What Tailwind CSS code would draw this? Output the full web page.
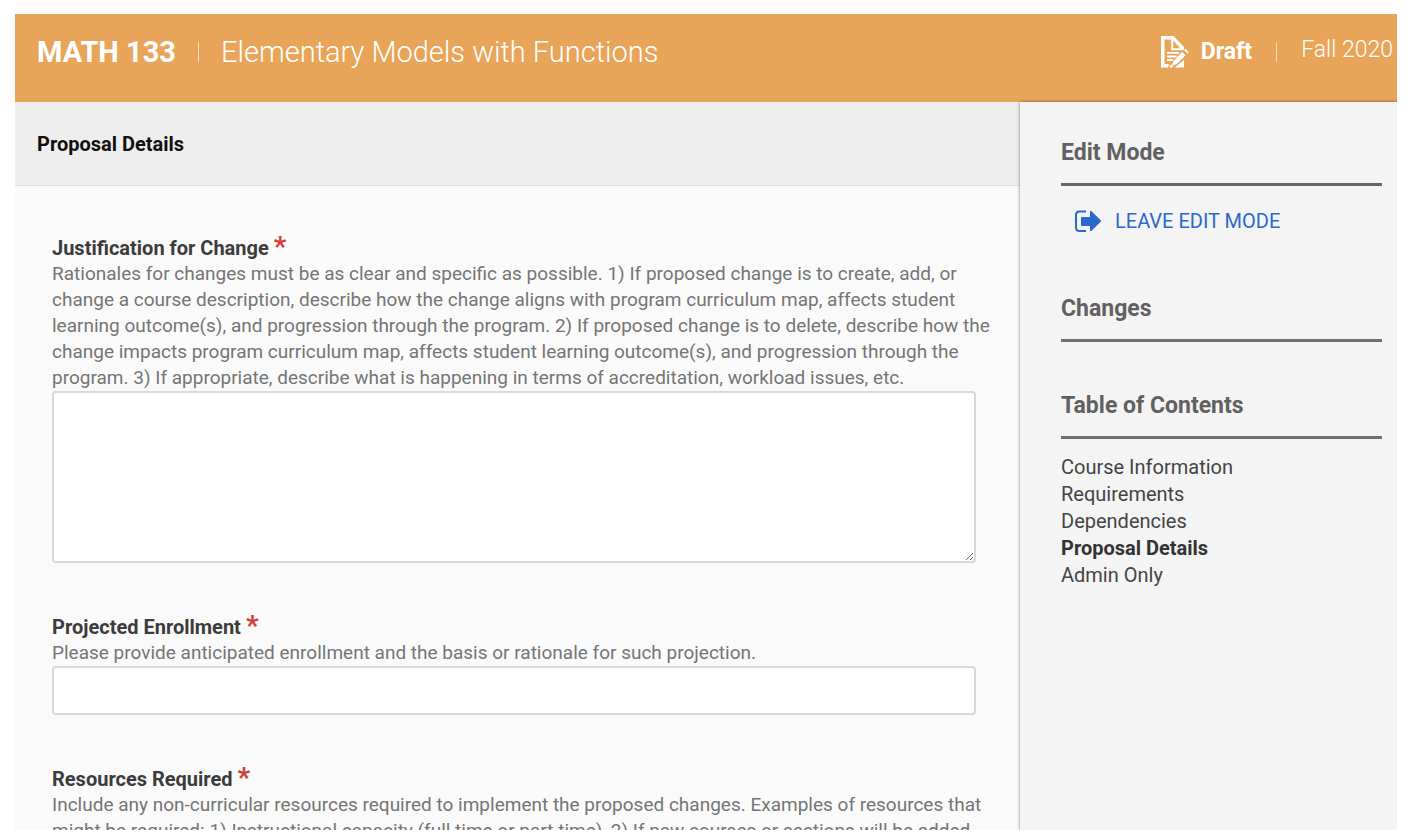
<!DOCTYPE html>
<html lang="en">
<head>
    <meta charset="UTF-8">
    <meta name="viewport" content="width=device-width, initial-scale=1.0">
    <title>MATH 133 - Elementary Models with Functions</title>
    <script src="https://cdn.jsdelivr.net/npm/@tailwindcss/browser@4"></script>
</head>
<body class="bg-white font-['Roboto',sans-serif]">
    <div class="h-screen px-[15px] pt-[14px] pb-[6px] overflow-hidden">
        <div class="h-full flex flex-col overflow-hidden">
            <!-- Course header -->
            <header class="shrink-0 h-[88px] bg-[#e8a55a] text-white flex justify-between pl-[22px] pr-1 pt-5">
                <h1 class="flex h-9 items-center gap-[22px] text-[29px] leading-9">
                    <span class="font-bold">MATH 133</span>
                    <span class="w-px h-5 bg-white/70"></span>
                    <span class="font-light">Elementary Models with Functions</span>
                </h1>
                <div class="flex h-9 items-center text-[23px] leading-8">
                    <svg class="w-7 h-8 mr-3" viewBox="0 0 28 32" fill="none">
                        <path d="M0 0h12.500L23 11v3h-2.500l-9-10.500H3.500V28H8l-1 3.500H0z" fill="#fff"/>
                        <path d="M11.200 2.500v10.800H22" stroke="#fff" stroke-width="2"/>
                        <path d="M6 16.800h12M6 20.500h9.500M6 24h6" stroke="#fff" stroke-width="1.800"/>
                        <path d="M9.500 28.500l3 1.200-1.500 1.800H8.500zM15 30.500l8-6.500v7.500h-9z" fill="#fff"/>
                        <path d="M12.500 25L21 16l3.500 3.300-9 9-4.500 1.200z" fill="#fff"/>
                        <path d="M23 14l1.200-1.200 3.500 3.400-1.200 1.300z" fill="#fff"/>
                    </svg>
                    <span class="font-bold">Draft</span>
                    <span class="w-px h-5 bg-white/60 mx-6"></span>
                    <span class="font-light pb-1">Fall 2020</span>
                </div>
            </header>

            <div class="flex-1 min-h-0 flex">
                <!-- Proposal form -->
                <main class="flex-1 min-w-0 bg-[#fafafa] overflow-hidden">
                    <div class="h-[84px] bg-[#eee] border-b border-[#ddd] px-[22px] flex items-center">
                        <h2 class="text-xl font-bold text-[#111]">Proposal Details</h2>
                    </div>
                    <form class="pl-[37px] pr-11 pt-[49px] flex flex-col gap-[51px] text-[19px] leading-[26px] text-[#757575]">
                        <div>
                            <label for="justification" class="flex gap-[5px] text-xl leading-[26px] font-bold text-[#3c3c3c]">Justification for Change <span class="text-[28px] leading-6 text-[#d0403a]">*</span></label>
                            <p class="whitespace-nowrap">
                                Rationales for changes must be as clear and specific as possible. 1) If proposed change is to create, add, or<br>
                                change a course description, describe how the change aligns with program curriculum map, affects student<br>
                                learning outcome(s), and progression through the program. 2) If proposed change is to delete, describe how the<br>
                                change impacts program curriculum map, affects student learning outcome(s), and progression through the<br>
                                program. 3) If appropriate, describe what is happening in terms of accreditation, workload issues, etc.
                            </p>
                            <textarea id="justification" class="block w-full h-[172px] bg-white border-2 border-[#d8d8d8] rounded resize-y"></textarea>
                        </div>
                        <div>
                            <label for="enrollment" class="flex gap-[5px] text-xl leading-[26px] font-bold text-[#3c3c3c]">Projected Enrollment <span class="text-[28px] leading-6 text-[#d0403a]">*</span></label>
                            <p>Please provide anticipated enrollment and the basis or rationale for such projection.</p>
                            <input id="enrollment" type="text" class="block w-full h-[49px] px-3 bg-white border-2 border-[#d8d8d8] rounded">
                        </div>
                        <div>
                            <label for="resources" class="flex gap-[5px] text-xl leading-[26px] font-bold text-[#3c3c3c]">Resources Required <span class="text-[28px] leading-6 text-[#d0403a]">*</span></label>
                            <p class="whitespace-nowrap">
                                Include any non-curricular resources required to implement the proposed changes. Examples of resources that<br>
                                might be required: 1) Instructional capacity (full time or part time), 2) If new courses or sections will be added,
                            </p>
                            <textarea id="resources" class="block w-full h-[172px] bg-white border-2 border-[#d8d8d8] rounded resize-y"></textarea>
                        </div>
                    </form>
                </main>

                <!-- Sidebar -->
                <aside class="relative shrink-0 w-[377px] bg-[#f4f4f4] pl-[41px] pr-[15px] pt-9 shadow-[0_0_3px_rgba(0,0,0,0.5)]">
                    <h3 class="h-12 border-b-3 border-[#666] text-[23px] leading-[30px] font-bold text-[#616161]">Edit Mode</h3>
                    <a href="#" class="flex items-center h-[70px] pl-[13px] gap-[14px] text-xl text-[#2a69cc]">
                        <svg class="w-[27px] h-6" viewBox="0 0 27 24" fill="none">
                            <path d="M12 2.500H5.500C3 2.500 2 4 2 6v12.500C2 20.500 3 22 5.500 22H12" stroke="currentColor" stroke-width="2"/>
                            <path d="M8 8h8V3q0-2 1.500-.8l9 8.800q1 1 0 2l-9 8.800Q16 23 16 21v-4H8q-1 0-1-1V9q0-1 1-1z" fill="currentColor"/>
                        </svg>
                        LEAVE EDIT MODE
                    </a>
                    <h3 class="mt-[38px] h-12 border-b-3 border-[#707070] text-[23px] leading-[30px] font-bold text-[#616161]">Changes</h3>
                    <h3 class="mt-[49px] h-12 border-b-3 border-[#707070] text-[23px] leading-[30px] font-bold text-[#616161]">Table of Contents</h3>
                    <nav class="mt-[15px] flex flex-col items-start text-xl leading-[27px] text-[#444]">
                        <a href="#">Course Information</a>
                        <a href="#">Requirements</a>
                        <a href="#">Dependencies</a>
                        <a href="#" class="font-bold text-[#333]">Proposal Details</a>
                        <a href="#">Admin Only</a>
                    </nav>
                </aside>
            </div>
        </div>
    </div>
</body>
</html>
